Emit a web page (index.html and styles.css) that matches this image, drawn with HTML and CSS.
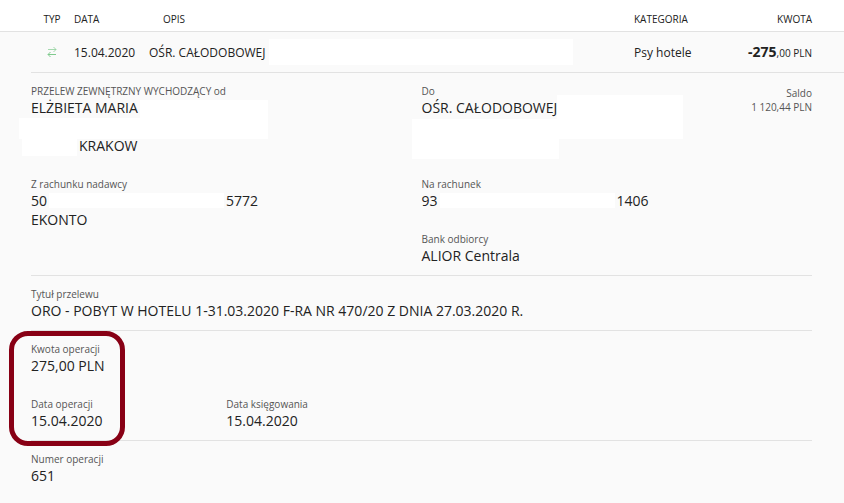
FILE: index.html
```html
<!DOCTYPE html>
<html lang="pl">
<head>
  <meta charset="UTF-8">
  <title>Historia operacji</title>
  <link rel="stylesheet" href="styles.css">
</head>
<body>
  <table class="operations">
    <thead>
      <tr>
        <th class="col-type">TYP</th>
        <th class="col-date">DATA</th>
        <th class="col-desc">OPIS</th>
        <th class="col-category">KATEGORIA</th>
        <th class="col-amount">KWOTA</th>
      </tr>
    </thead>
    <tbody>
      <tr>
        <td class="col-type">
          <svg class="icon" width="10" height="10" viewBox="0 0 10 10" fill="none" stroke="#7fca8d">
            <path d="M1 2.500H9M6.500 0L9 2.500L6.500 5" stroke-opacity="0.7"/>
            <path d="M9 7.500H1M3.500 5L1 7.500L3.500 10"/>
          </svg>
        </td>
        <td class="col-date">15.04.2020</td>
        <td class="col-desc"><div class="desc">OŚR. CAŁODOBOWEJ <span class="blank blank-desc"></span></div></td>
        <td class="col-category">Psy hotele</td>
        <td class="col-amount"><strong>-275</strong><small>,00 PLN</small></td>
      </tr>
    </tbody>
  </table>

  <div class="details">
    <section class="group">
      <dl class="column sender">
        <div class="field">
          <dt>PRZELEW ZEWNĘTRZNY WYCHODZĄCY od</dt>
          <dd>ELŻBIETA MARIA</dd>
          <dd class="city">KRAKOW</dd>
          <dd class="blank blank-name"></dd>
          <dd class="blank blank-street"></dd>
          <dd class="blank blank-code"></dd>
        </div>
        <div class="field">
          <dt>Z rachunku nadawcy</dt>
          <dd class="account">50<span class="blank"></span>5772</dd>
          <dd>EKONTO</dd>
        </div>
      </dl>
      <dl class="column recipient">
        <div class="field address">
          <dt>Do</dt>
          <dd>OŚR. CAŁODOBOWEJ</dd>
          <dd class="blank blank-recipient"></dd>
          <dd class="blank blank-address"></dd>
        </div>
        <div class="field">
          <dt>Na rachunek</dt>
          <dd class="account">93<span class="blank"></span>1406</dd>
        </div>
        <div class="field">
          <dt>Bank odbiorcy</dt>
          <dd>ALIOR Centrala</dd>
        </div>
      </dl>
      <div class="balance">
        <div>Saldo</div>
        <div>1 120,44 PLN</div>
      </div>
    </section>

    <section class="group">
      <dl class="column">
        <div class="field">
          <dt>Tytuł przelewu</dt>
          <dd>ORO - POBYT W HOTELU 1-31.03.2020 F-RA NR 470/20 Z DNIA 27.03.2020 R.</dd>
        </div>
      </dl>
    </section>

    <section class="group">
      <dl class="quarter">
        <div class="field">
          <dt>Kwota operacji</dt>
          <dd>275,00 PLN</dd>
        </div>
        <div class="field">
          <dt>Data operacji</dt>
          <dd>15.04.2020</dd>
        </div>
      </dl>
      <dl class="quarter bottom">
        <div class="field">
          <dt>Data księgowania</dt>
          <dd>15.04.2020</dd>
        </div>
      </dl>
      <div class="marker"></div>
    </section>

    <section class="group">
      <dl class="quarter">
        <div class="field">
          <dt>Numer operacji</dt>
          <dd>651</dd>
        </div>
      </dl>
    </section>
  </div>
</body>
</html>
```
FILE: styles.css
```css
* {
  box-sizing: border-box;
}

body {
  margin: 0;
  background-color: #fafafa;
  color: #222;
  font-family: "Open Sans", sans-serif;
  font-size: 14px;
  line-height: 19px;
}

/* list of operations */
.operations {
  width: 100%;
  table-layout: fixed;
  border-spacing: 0;
}

.operations th {
  height: 32px;
  padding: 8px 0 0;
  background-color: #fff;
  border-bottom: 1px solid #e2e2e2;
  font-size: 10px;
  font-weight: normal;
  line-height: 15px;
  text-align: left;
}

.operations td {
  height: 40px;
  padding: 0;
  font-size: 12px;
}

.operations .col-type {
  width: 74px;
  padding-left: 30px;
  text-align: center;
}

.operations .col-date {
  width: 75px;
}

.operations th.col-desc {
  padding-left: 14px;
}

.operations .col-category {
  width: 110px;
}

.operations .col-amount {
  width: 100px;
  padding-right: 32px;
  text-align: right;
}

.col-amount strong {
  font-size: 14px;
}

.col-amount small {
  font-size: 10px;
}

.icon {
  display: block;
  margin: 0 auto;
}

.desc {
  display: flex;
  align-items: center;
  gap: 4px;
}

.blank {
  background-color: #fff;
}

.blank-desc {
  width: 304px;
  height: 26px;
}

/* details of the operation */
.details {
  margin-left: 31px;
  padding-right: 32px;
  border-top: 1px solid #e2e2e2;
}

.group {
  position: relative;
  display: flex;
  padding: 11px 0 10px;
}

.group + .group {
  border-top: 1px solid #e2e2e2;
}

dl,
dd {
  margin: 0;
}

dt,
.balance {
  color: #555;
  font-size: 10px;
  line-height: 14px;
}

.column,
.quarter {
  display: flex;
  flex-direction: column;
  gap: 22px;
}

.sender,
.recipient {
  width: 50%;
}

.quarter {
  width: 25%;
}

.bottom {
  justify-content: flex-end;
}

.field {
  position: relative;
}

.city {
  margin-top: 19px;
  padding-left: 48px;
}

.address {
  height: 71px;
}

.account {
  display: flex;
  align-items: center;
  gap: 2px;
}

.account .blank {
  width: 175px;
  height: 15px;
}

.balance {
  position: absolute;
  top: 13px;
  right: 0;
  text-align: right;
}

/* the white boxes lie under the text next to them */
.field > .blank {
  position: absolute;
  z-index: -1;
}

.blank-name {
  top: 16px;
  left: 109px;
  width: 128px;
  height: 39px;
}

.blank-street {
  top: 34px;
  left: -12px;
  width: 249px;
  height: 21px;
}

.blank-code {
  top: 55px;
  left: -9px;
  width: 55px;
  height: 17px;
}

.blank-recipient {
  top: 11px;
  left: 135px;
  width: 126px;
  height: 44px;
}

.blank-address {
  top: 35px;
  left: -10px;
  width: 147px;
  height: 40px;
}

/* frame round the amount and the date */
.marker {
  position: absolute;
  z-index: 1;
  top: 0;
  left: -22px;
  width: 116px;
  height: 115px;
  border: 5px solid #880015;
  border-radius: 19px;
}
```
